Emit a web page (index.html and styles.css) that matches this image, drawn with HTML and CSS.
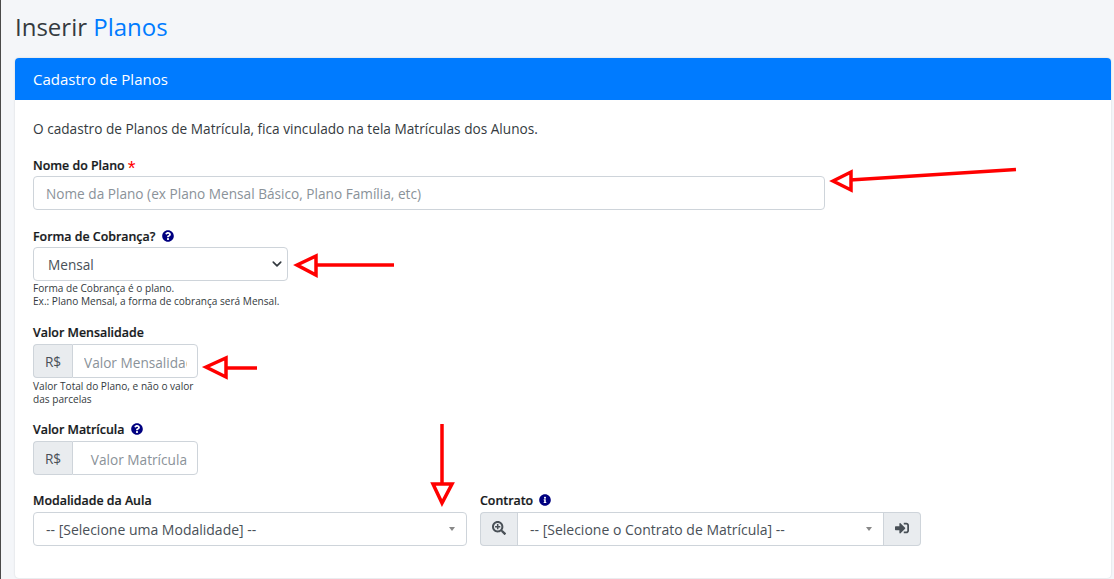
FILE: index.html
```html
<!DOCTYPE html>
<html lang="pt-BR">
<head>
  <meta charset="UTF-8" />
  <meta name="viewport" content="width=device-width, initial-scale=1.0" />
  <title>Inserir Planos</title>
  <link rel="stylesheet" href="styles.css">
</head>
<body>
  <div class="content">
    <h1 class="page-title">Inserir <span class="text-blue">Planos</span></h1>

    <div class="card">
      <div class="card-header">Cadastro de Planos</div>
      <div class="card-body">
        <p class="intro">O cadastro de Planos de Matrícula, fica vinculado na tela Matrículas dos Alunos.</p>

        <div class="form-group nome">
          <label>Nome do Plano <span class="required">*</span></label>
          <input type="text" class="form-control" placeholder="Nome da Plano (ex Plano Mensal Básico, Plano Família, etc)" />
        </div>

        <div class="form-group cobranca">
          <label>Forma de Cobrança?
            <svg class="help-icon" viewBox="0 0 512 512"><path d="M504 256c0 136.997-111.043 248-248 248S8 392.997 8 256C8 119.083 119.043 8 256 8s248 111.083 248 248zM262.655 90c-54.497 0-89.255 22.957-116.549 63.758-3.536 5.286-2.353 12.415 2.715 16.258l34.699 26.31c5.205 3.947 12.621 3.008 16.665-2.122 17.864-22.658 30.113-35.797 57.303-35.797 20.429 0 45.698 13.148 45.698 32.958 0 14.976-12.363 22.667-32.534 33.976C247.128 238.528 216 254.941 216 296v4c0 6.627 5.373 12 12 12h56c6.627 0 12-5.373 12-12v-1.333c0-28.462 83.186-29.647 83.186-106.667 0-58.002-60.165-102-116.531-102zM256 338c-25.365 0-46 20.635-46 46 0 25.364 20.635 46 46 46s46-20.636 46-46c0-25.365-20.635-46-46-46z"/></svg>
          </label>
          <select class="form-control select-native">
            <option>Mensal</option>
          </select>
          <small>Forma de Cobrança é o plano.<br>Ex.: Plano Mensal, a forma de cobrança será Mensal.</small>
        </div>

        <div class="form-group valor valor-mensal">
          <label>Valor Mensalidade</label>
          <div class="input-group">
            <span class="addon">R$</span>
            <input type="text" class="form-control" placeholder="Valor Mensalidade" />
          </div>
          <small>Valor Total do Plano, e não o valor das parcelas</small>
        </div>

        <div class="form-group valor valor-matricula">
          <label>Valor Matrícula
            <svg class="help-icon" viewBox="0 0 512 512"><path d="M504 256c0 136.997-111.043 248-248 248S8 392.997 8 256C8 119.083 119.043 8 256 8s248 111.083 248 248zM262.655 90c-54.497 0-89.255 22.957-116.549 63.758-3.536 5.286-2.353 12.415 2.715 16.258l34.699 26.31c5.205 3.947 12.621 3.008 16.665-2.122 17.864-22.658 30.113-35.797 57.303-35.797 20.429 0 45.698 13.148 45.698 32.958 0 14.976-12.363 22.667-32.534 33.976C247.128 238.528 216 254.941 216 296v4c0 6.627 5.373 12 12 12h56c6.627 0 12-5.373 12-12v-1.333c0-28.462 83.186-29.647 83.186-106.667 0-58.002-60.165-102-116.531-102zM256 338c-25.365 0-46 20.635-46 46 0 25.364 20.635 46 46 46s46-20.636 46-46c0-25.365-20.635-46-46-46z"/></svg>
          </label>
          <div class="input-group">
            <span class="addon">R$</span>
            <input type="text" class="form-control right" placeholder="Valor Matrícula" />
          </div>
        </div>

        <div class="form-row">
          <div class="modalidade">
            <label>Modalidade da Aula</label>
            <div class="select2">
              <span>-- [Selecione uma Modalidade] --</span>
              <i class="caret"></i>
            </div>
          </div>
          <div class="contrato">
            <label>Contrato
              <svg class="help-icon" viewBox="0 0 512 512"><path d="M256 8C119.043 8 8 119.083 8 256c0 136.997 111.043 248 248 248s248-111.003 248-248C504 119.083 392.957 8 256 8zm0 110c23.196 0 42 18.804 42 42s-18.804 42-42 42-42-18.804-42-42 18.804-42 42-42zm56 254c0 6.627-5.373 12-12 12h-88c-6.627 0-12-5.373-12-12v-24c0-6.627 5.373-12 12-12h12v-64h-12c-6.627 0-12-5.373-12-12v-24c0-6.627 5.373-12 12-12h64c6.627 0 12 5.373 12 12v100h12c6.627 0 12 5.373 12 12v24z"/></svg>
            </label>
            <div class="input-group">
              <span class="addon addon-icon">
                <svg viewBox="0 0 512 512"><path d="M304 192v32c0 6.6-5.4 12-12 12h-56v56c0 6.6-5.4 12-12 12h-32c-6.6 0-12-5.4-12-12v-56h-56c-6.6 0-12-5.4-12-12v-32c0-6.6 5.4-12 12-12h56v-56c0-6.6 5.4-12 12-12h32c6.6 0 12 5.4 12 12v56h56c6.6 0 12 5.4 12 12zm201 284.7L476.7 505c-9.4 9.4-24.6 9.4-33.9 0L343 405.3c-4.5-4.5-7-10.6-7-17V372c-35.3 27.6-79.7 44-128 44C93.1 416 0 322.9 0 208S93.1 0 208 0s208 93.1 208 208c0 48.3-16.4 92.7-44 128h16.3c6.4 0 12.5 2.5 17 7l99.7 99.7c9.3 9.4 9.3 24.6 0 34zM344 208c0-75.2-60.8-136-136-136S72 132.8 72 208s60.8 136 136 136 136-60.8 136-136z"/></svg>
              </span>
              <div class="select2 inner">
                <span>-- [Selecione o Contrato de Matrícula] --</span>
                <i class="caret"></i>
              </div>
              <span class="addon addon-icon addon-end">
                <svg viewBox="0 0 512 512"><path d="M416 448h-84c-6.6 0-12-5.4-12-12v-40c0-6.6 5.4-12 12-12h84c17.7 0 32-14.3 32-32V160c0-17.7-14.3-32-32-32h-84c-6.6 0-12-5.4-12-12V76c0-6.6 5.4-12 12-12h84c53 0 96 43 96 96v192c0 53-43 96-96 96zm-47-201L201 79c-15-15-41-4.5-41 17v96H24c-13.3 0-24 10.7-24 24v96c0 13.3 10.7 24 24 24h136v96c0 21.5 26 32 41 17l168-168c9.3-9.4 9.3-24.6 0-34z"/></svg>
              </span>
            </div>
          </div>
        </div>
      </div>
    </div>
  </div>

  <!-- red arrows painted over the screenshot -->
  <svg class="arrows" viewBox="0 0 1114 579">
    <path d="M1016 169.500 L850 180"/>
    <path d="M833 181 L851 172 L851 190 Z"/>
    <path d="M394 265 L316 265"/>
    <path d="M297 265 L316 256 L316 275 Z"/>
    <path d="M257 368 L226 368"/>
    <path d="M206 367 L226 358 L226 377 Z"/>
    <path d="M442 424 L442 484"/>
    <path d="M442 503 L433 484 L452 484 Z"/>
  </svg>
</body>
</html>
```

FILE: styles.css
```css
* {
  box-sizing: border-box;
}

html, body {
  height: 100%;
  overflow: hidden;
}

body {
  margin: 0;
  font-family: "Open Sans", "Noto Sans", sans-serif;
  font-size: 13.65px;
  color: #212529;
  background-color: #f4f6f9;
  border-left: 1px solid #4a4a4a;
}

.content {
  padding: 0 3px 0 14px;
}

.page-title {
  margin: 0;
  height: 58px;
  padding-top: 11px;
  font-size: 24px;
  line-height: 32px;
  font-weight: 500;
  color: #343a40;
}

.text-blue {
  color: #007bff;
}

.card {
  background-color: #fff;
  border-radius: 4px;
  box-shadow: 0 0 2px rgba(0, 0, 0, 0.15);
}

.card-header {
  height: 42px;
  padding: 0 18px;
  line-height: 43px;
  font-size: 15px;
  color: #fff;
  background-color: #007bff;
  border-radius: 4px 4px 0 0;
}

.card-body {
  padding: 19px 18px 32px;
}

.intro {
  margin: 0 0 16px;
  line-height: 20px;
  color: #343a40;
}

label {
  display: block;
  height: 21px;
  line-height: 21px;
  font-size: 12.4px;
  font-weight: 600;
  color: #16191c;
  -webkit-text-stroke: 0.2px #16191c;
}

.valor label,
.form-row label {
  height: 22px;
}

.required {
  font-family: "Liberation Sans", sans-serif;
  font-size: 20px;
  font-weight: 400;
  line-height: 0;
  vertical-align: -5px;
  color: #f00;
  -webkit-text-stroke: 0;
}

.help-icon {
  width: 12px;
  height: 12px;
  margin-left: 3px;
  vertical-align: -1px;
  fill: #000080;
}

.form-group {
  margin-bottom: 16px;
}

.nome .form-control {
  width: 792px;
  padding-top: 1px;
}

.cobranca {
  margin-bottom: 15px;
}

.cobranca .form-control {
  width: 255px;
}

.form-control {
  display: block;
  height: 34px;
  padding: 0 12px;
  font-family: inherit;
  font-size: 13.65px;
  color: #495057;
  background-color: #fff;
  border: 1px solid #ced4da;
  border-radius: 4px;
  outline: none;
}

.form-control::placeholder {
  color: #8a9299;
  opacity: 1;
}

.select-native {
  padding: 1px 0 0 14px;
  appearance: none;
  background-image: url("data:image/svg+xml,%3csvg xmlns='http://www.w3.org/2000/svg' viewBox='0 0 16 16'%3e%3cpath fill='none' stroke='%23343a40' stroke-linecap='round' stroke-linejoin='round' stroke-width='2.6' d='M2 5l6 6 6-6'/%3e%3c/svg%3e");
  background-repeat: no-repeat;
  background-position: right 5px center;
  background-size: 10px 10px;
}

small {
  display: block;
  padding-top: 1px;
  font-size: 10.1px;
  line-height: 12.5px;
  color: #343a40;
}

.valor {
  width: 165px;
}

.valor small {
  padding-top: 2px;
}

.valor-mensal {
  margin-bottom: 14px;
}

.valor-matricula {
  margin-bottom: 15px;
}

.input-group {
  display: flex;
  height: 34px;
}

.addon {
  flex: none;
  width: 39px;
  display: flex;
  align-items: center;
  justify-content: center;
  font-size: 13.65px;
  color: #495057;
  background-color: #e9ecef;
  border: 1px solid #ced4da;
  border-right: 0;
  border-radius: 4px 0 0 4px;
}

.input-group .form-control {
  flex: 1;
  min-width: 0;
  width: 100%;
  padding: 2px 10px 0 11px;
  border-radius: 0 4px 4px 0;
}

.input-group .right {
  text-align: right;
}

.form-row {
  display: flex;
  gap: 13px;
}

.modalidade {
  width: 434px;
}

.contrato {
  width: 441px;
}

.select2 {
  display: flex;
  align-items: center;
  justify-content: space-between;
  height: 34px;
  padding: 1px 11px 0 12px;
  font-size: 14px;
  color: #495057;
  background-color: #fff;
  border: 1px solid #ced4da;
  border-radius: 4px;
}

.select2.inner {
  flex: 1;
  border-radius: 0;
}

.caret {
  width: 0;
  height: 0;
  margin-top: -2px;
  border-style: solid;
  border-width: 4px 3.5px 0;
  border-color: #888 transparent transparent;
}

.addon-icon {
  width: 37px;
}

.addon-icon svg {
  width: 14px;
  height: 14px;
  margin-top: -2px;
  fill: #495057;
}

.addon-end {
  border: 1px solid #ced4da;
  border-left: 0;
  border-radius: 0 4px 4px 0;
}

.arrows {
  position: absolute;
  top: 0;
  left: 0;
  width: 1114px;
  height: 579px;
  fill: none;
  stroke: #f00;
  stroke-width: 3.5;
  pointer-events: none;
}
```
